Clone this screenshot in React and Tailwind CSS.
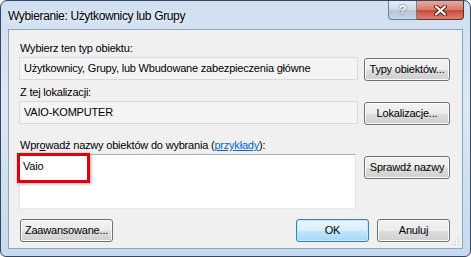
import React from 'react';

const font = { fontFamily: '"Liberation Sans", Arial, sans-serif' };

const Btn = ({ children, className = '', primary = false }) => (
    <div
        className={`h-[23px] shrink-0 whitespace-nowrap rounded-[3px] border flex items-center justify-center text-black
      ${primary
                ? 'border-[#3c7fb1] bg-[linear-gradient(#eaf6fd_0%,#d9effc_50%,#bee6fd_51%,#a7d9f5_100%)] shadow-[inset_0_0_0_1px_#c6e7fb]'
                : 'border-[#707070] bg-[linear-gradient(#f2f2f2_0%,#ebebeb_50%,#dddddd_51%,#cfcfcf_100%)] shadow-[inset_0_0_0_1px_#fcfcfc]'} ${className}`}
    >
        {children}
    </div>
);

const Field = ({ children }) => (
    <div className="w-[339px] h-[23px] shrink-0 whitespace-nowrap border border-[#dadada] bg-[#f4f4f4] flex items-center pl-[4px] text-black">
        {children}
    </div>
);

const App = () => {
    return (
        <div className="w-[471px] h-[257px] bg-white text-[11px] tracking-[-0.2px]" style={font}>
            <div className="w-full h-full flex flex-col rounded-t-[7px] rounded-b-[6px] border border-[#35475f] bg-[linear-gradient(180deg,#cfdff1_0%,#dce8f5_40%,#c7d9ee_100%)] overflow-hidden">
                {/* title bar */}
                <div className="h-[28px] flex items-start">
                    <span className="ml-[7px] mt-[6px] text-[12px] tracking-[-0.35px] text-black [text-shadow:0_0_6px_#ffffff]">Wybieranie: Użytkownicy lub Grupy</span>
                    <div className="ml-auto mr-[6px] flex h-[19px]">
                        <div className="w-[29px] h-full rounded-bl-[4px] border border-t-0 border-[#6d7f96] bg-[linear-gradient(#e3ebf5_0%,#cdd9e7_50%,#b4c5d9_51%,#c6d5e6_100%)] flex items-center justify-center text-[13px] font-bold text-white [text-shadow:0_0_2px_#2b3e55]">?</div>
                        <div className="w-[47px] h-full rounded-br-[4px] border border-l-0 border-t-0 border-[#6d2b27] bg-[linear-gradient(#eba99b_0%,#d8796a_50%,#c8483a_51%,#dc8070_100%)] flex items-center justify-center">
                            <svg width="13" height="11" viewBox="0 0 13 11">
                                <path d="M2 1.5 L11 9.5 M11 1.5 L2 9.5" stroke="#4a1a14" strokeWidth="4" strokeLinecap="round" />
                                <path d="M2 1.5 L11 9.5 M11 1.5 L2 9.5" stroke="#ffffff" strokeWidth="2.2" strokeLinecap="round" />
                            </svg>
                        </div>
                    </div>
                </div>

                {/* client area */}
                <div className="relative mx-[7px] mb-[7px] flex-1 border border-[#8fa4bd] bg-[#f0f0f0] pl-[10px] pr-[12px] text-black">
                    <div className="mt-[10px] ml-px h-[16px] leading-[16px]">Wybierz ten typ obiektu:</div>
                    <div className="mt-[1px] flex items-start justify-between">
                        <Field>Użytkownicy, Grupy, lub Wbudowane zabezpieczenia główne</Field>
                        <Btn className="w-[86px] mt-px">Typy obiektów...</Btn>
                    </div>

                    <div className="mt-[3px] ml-px h-[16px] leading-[16px]">Z tej lokalizacji:</div>
                    <div className="mt-[1px] flex items-start justify-between">
                        <Field>VAIO-KOMPUTER</Field>
                        <Btn className="w-[86px] mt-px">Lokalizacje...</Btn>
                    </div>

                    <div className="mt-[12px] ml-px h-[16px] leading-[16px] whitespace-nowrap">
                        Wpr<span className="underline">o</span>wadź nazwy obiektów do wybrania (<span className="text-[#0066cc] underline">przykłady</span>):
                    </div>
                    <div className="mt-[1px] flex items-start justify-between">
                        <div className="relative w-[337px] h-[55px] shrink-0 border border-t-[#abadb3] border-x-[#e2e3ea] border-b-[#e3e9ef] bg-white pl-[3px] pt-[3px]">
                            Vaio
                            <div className="absolute left-[-3px] top-[-2px] w-[73px] h-[30px] border-[3px] border-[#e3000f] shadow-[1px_1px_3px_rgba(0,0,0,0.35)]" />
                        </div>
                        <Btn className="w-[86px] mt-[2px]">Sprawdź nazwy</Btn>
                    </div>

                    <div className="mt-[10px] flex items-start">
                        <Btn className="w-[93px] ml-px">Zaawansowane...</Btn>
                        <Btn primary className="w-[73px] ml-auto">OK</Btn>
                        <Btn className="w-[73px] ml-[8px]">Anuluj</Btn>
                    </div>

                    {/* resize grip */}
                    <svg className="absolute right-[2px] bottom-[2px]" width="8" height="8" viewBox="0 0 8 8">
                        <g fill="#b5b5b5">
                            <rect x="6" y="0" width="1" height="1" />
                            <rect x="3" y="3" width="1" height="1" />
                            <rect x="6" y="3" width="1" height="1" />
                            <rect x="0" y="6" width="1" height="1" />
                            <rect x="3" y="6" width="1" height="1" />
                            <rect x="6" y="6" width="1" height="1" />
                        </g>
                    </svg>
                </div>
            </div>
        </div>
    );
};

export default App;
